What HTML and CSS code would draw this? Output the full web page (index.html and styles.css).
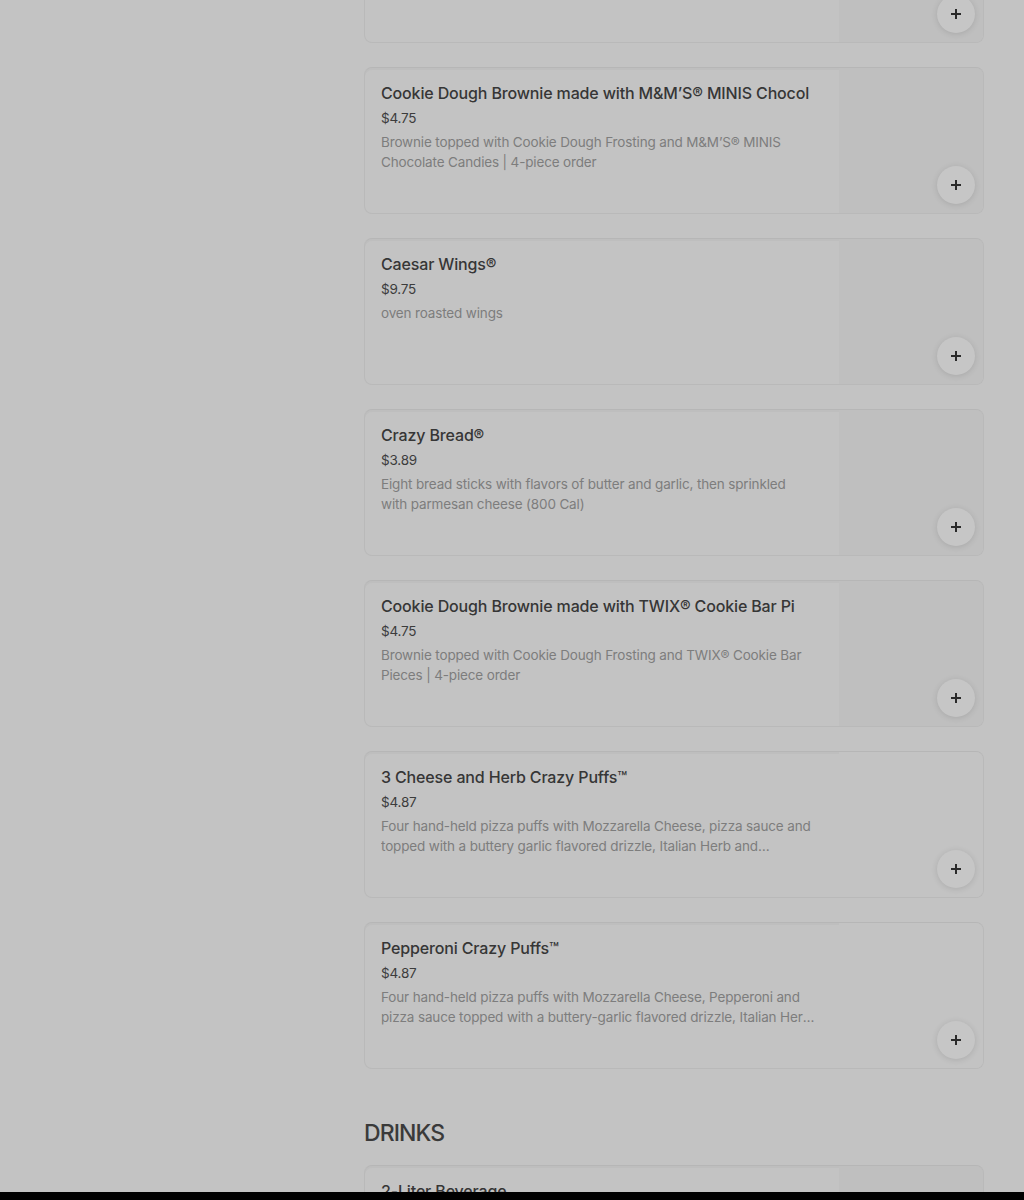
FILE: index.html
```html
<!DOCTYPE html>
<html>
<head>
<meta charset="utf-8">
<link rel="stylesheet" href="styles.css">
</head>
<body>
<div class="page">
  <main class="menu">
    <section class="section">
      <div class="list">
        <div class="card">
          <div class="info">
            <div class="title">Large Pepperoni Pizza</div>
            <div class="price">$9.99</div>
            <div class="desc">Classic pepperoni pizza</div>
          </div>
          <div class="thumb"></div>
          <button class="add"><svg viewBox="0 0 12 12" width="12" height="12"><path d="M6 1v10M1 6h10" stroke="#2a2a2a" stroke-width="2"/></svg></button>
        </div>
        <div class="card">
          <div class="info">
            <div class="title">Cookie Dough Brownie made with M&amp;M’S® MINIS Chocol</div>
            <div class="price">$4.75</div>
            <div class="desc">Brownie topped with Cookie Dough Frosting and M&amp;M’S® MINIS Chocolate Candies | 4-piece order</div>
          </div>
          <div class="thumb"></div>
          <button class="add"><svg viewBox="0 0 12 12" width="12" height="12"><path d="M6 1v10M1 6h10" stroke="#2a2a2a" stroke-width="2"/></svg></button>
        </div>
        <div class="card">
          <div class="info">
            <div class="title">Caesar Wings®</div>
            <div class="price">$9.75</div>
            <div class="desc">oven roasted wings</div>
          </div>
          <div class="thumb"></div>
          <button class="add"><svg viewBox="0 0 12 12" width="12" height="12"><path d="M6 1v10M1 6h10" stroke="#2a2a2a" stroke-width="2"/></svg></button>
        </div>
        <div class="card">
          <div class="info">
            <div class="title">Crazy Bread®</div>
            <div class="price">$3.89</div>
            <div class="desc">Eight bread sticks with flavors of butter and garlic, then sprinkled with parmesan cheese (800 Cal)</div>
          </div>
          <div class="thumb"></div>
          <button class="add"><svg viewBox="0 0 12 12" width="12" height="12"><path d="M6 1v10M1 6h10" stroke="#2a2a2a" stroke-width="2"/></svg></button>
        </div>
        <div class="card">
          <div class="info">
            <div class="title">Cookie Dough Brownie made with TWIX® Cookie Bar Pi</div>
            <div class="price">$4.75</div>
            <div class="desc">Brownie topped with Cookie Dough Frosting and TWIX® Cookie Bar Pieces | 4-piece order</div>
          </div>
          <div class="thumb"></div>
          <button class="add"><svg viewBox="0 0 12 12" width="12" height="12"><path d="M6 1v10M1 6h10" stroke="#2a2a2a" stroke-width="2"/></svg></button>
        </div>
        <div class="card">
          <div class="info">
            <div class="title">3 Cheese and Herb Crazy Puffs™</div>
            <div class="price">$4.87</div>
            <div class="desc">Four hand-held pizza puffs with Mozzarella Cheese, pizza sauce and topped with a buttery garlic flavored drizzle, Italian Herb and Parmesan seasoning</div>
          </div>
          <div class="thumb plain"></div>
          <button class="add"><svg viewBox="0 0 12 12" width="12" height="12"><path d="M6 1v10M1 6h10" stroke="#2a2a2a" stroke-width="2"/></svg></button>
        </div>
        <div class="card">
          <div class="info">
            <div class="title">Pepperoni Crazy Puffs™</div>
            <div class="price">$4.87</div>
            <div class="desc">Four hand-held pizza puffs with Mozzarella Cheese, Pepperoni and pizza sauce topped with a buttery-garlic flavored drizzle, Italian Herb and Parmesan seasoning</div>
          </div>
          <div class="thumb plain"></div>
          <button class="add"><svg viewBox="0 0 12 12" width="12" height="12"><path d="M6 1v10M1 6h10" stroke="#2a2a2a" stroke-width="2"/></svg></button>
        </div>
      </div>
    </section>
    <section class="section">
      <h2 class="heading">DRINKS</h2>
      <div class="list">
        <div class="card">
          <div class="info">
            <div class="title">2-Liter Beverage</div>
            <div class="price">$3.49</div>
            <div class="desc">Choose your favorite soft drink</div>
          </div>
          <div class="thumb"></div>
          <button class="add"><svg viewBox="0 0 12 12" width="12" height="12"><path d="M6 1v10M1 6h10" stroke="#2a2a2a" stroke-width="2"/></svg></button>
        </div>
      </div>
    </section>
  </main>
</div>
<div class="bottombar"></div>
</body>
</html>
```
FILE: styles.css
```css
html, body {
  margin: 0;
  padding: 0;
  background: #c3c3c3;
  height: 1200px;
  overflow: hidden;
}
body {
  font-family: Inter, "Noto Sans", sans-serif;
  color: #333;
}
.page {
  display: flex;
  justify-content: flex-start;
  padding-left: 364px;
}
.menu {
  width: 620px;
  margin-top: -104px;
}
.list {
  display: flex;
  flex-direction: column;
  gap: 24px;
}
.section + .section {
  margin-top: 48px;
}
.heading {
  margin: 0 0 16px;
  font-size: 23px;
  line-height: 32px;
  font-weight: 500;
  letter-spacing: -0.9px;
  color: #3a3a3a;
}
.card {
  position: relative;
  display: flex;
  height: 145px;
  border: 1px solid #b9b9b9;
  border-top-color: #b6b6b6;
  border-radius: 8px;
  background: #c3c3c3;
  overflow: hidden;
  box-shadow: inset 0 2px 0 #bebebe;
}
.info {
  flex: 1;
  min-width: 0;
  padding: 15px 24px 0 16px;
}
.title {
  font-size: 16px;
  line-height: 20px;
  font-weight: 500;
  color: #363636;
  white-space: nowrap;
  overflow: hidden;
  letter-spacing: -0.15px;
  margin-bottom: 5px;
}
.price {
  font-size: 13.5px;
  line-height: 20px;
  color: #3c3c3c;
  margin-bottom: 4px;
  letter-spacing: -0.2px;
}
.desc {
  font-size: 13.5px;
  line-height: 20px;
  color: #7d7d7d;
  letter-spacing: -0.15px;
  display: -webkit-box;
  -webkit-line-clamp: 2;
  -webkit-box-orient: vertical;
  overflow: hidden;
}
.thumb {
  flex: 0 0 144px;
  background: #bfbfbf;
}
.thumb.plain {
  background: #c3c3c3;
}
.add {
  position: absolute;
  right: 8px;
  bottom: 9px;
  width: 38px;
  height: 38px;
  border-radius: 50%;
  border: none;
  padding: 0;
  background: #c6c6c6;
  box-shadow: 0 1px 6px rgba(0, 0, 0, 0.12);
  display: flex;
  align-items: center;
  justify-content: center;
}
.bottombar {
  position: fixed;
  left: 0;
  right: 0;
  bottom: 0;
  height: 8px;
  background: #000;
}
```
